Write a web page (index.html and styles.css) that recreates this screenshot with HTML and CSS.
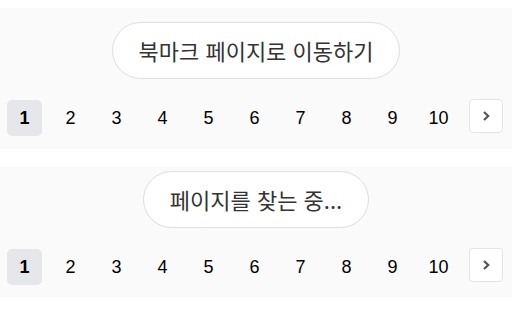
FILE: index.html
```html
<!doctype html>
<html lang="ko">
<head>
    <meta charset="UTF-8">
    <title>북마크</title>
    <link rel="stylesheet" href="styles.css">
</head>
<body>
    <div class="panel panel-first">
        <button class="pill-btn">북마크 페이지로 이동하기</button>
        <div class="pager">
            <span class="page active">1</span>
            <span class="page">2</span>
            <span class="page">3</span>
            <span class="page">4</span>
            <span class="page">5</span>
            <span class="page">6</span>
            <span class="page">7</span>
            <span class="page">8</span>
            <span class="page">9</span>
            <span class="page">10</span>
            <span class="page-next">
                <svg width="14" height="14" viewBox="0 0 14 14"><path d="M5 3 L9.2 7 L5 11" fill="none" stroke="#555" stroke-width="2.2"/></svg>
            </span>
        </div>
    </div>
    <div class="panel panel-second">
        <button class="pill-btn">페이지를 찾는 중...</button>
        <div class="pager">
            <span class="page active">1</span>
            <span class="page">2</span>
            <span class="page">3</span>
            <span class="page">4</span>
            <span class="page">5</span>
            <span class="page">6</span>
            <span class="page">7</span>
            <span class="page">8</span>
            <span class="page">9</span>
            <span class="page">10</span>
            <span class="page-next">
                <svg width="14" height="14" viewBox="0 0 14 14"><path d="M5 3 L9.2 7 L5 11" fill="none" stroke="#555" stroke-width="2.2"/></svg>
            </span>
        </div>
    </div>
</body>
</html>
```

FILE: styles.css
```css
body {
    margin: 0;
    background: #fff;
    font-family: "Liberation Sans", Arial, sans-serif;
}
.panel {
    background: #fafafa;
    display: flex;
    flex-direction: column;
    align-items: center;
    gap: 21px;
}
.panel-first {
    margin-top: 8px;
    padding: 14px 0 13px;
}
.panel-second {
    margin-top: 18px;
    padding: 4px 0 12px;
}
.pill-btn {
    font-family: "Noto Sans CJK KR", "Noto Sans", sans-serif;
    font-size: 22px;
    line-height: 27px;
    color: #333;
    background: #fff;
    border: 1px solid #dedede;
    border-radius: 29px;
    padding: 14px 26px;
    cursor: pointer;
}
.pager {
    align-self: stretch;
    display: flex;
    align-items: center;
    gap: 11px;
    padding-left: 7px;
}
.page {
    width: 35px;
    height: 36px;
    display: flex;
    align-items: center;
    justify-content: center;
    font-size: 18px;
    color: #000;
    border-radius: 5px;
}
.page.active {
    background: #e5e7eb;
    font-weight: bold;
}
.page-next {
    width: 32px;
    height: 32px;
    margin-left: 2px;
    margin-top: -4px;
    display: flex;
    align-items: center;
    justify-content: center;
    background: #fff;
    border: 1px solid #e4e4e4;
    border-radius: 4px;
}
```
